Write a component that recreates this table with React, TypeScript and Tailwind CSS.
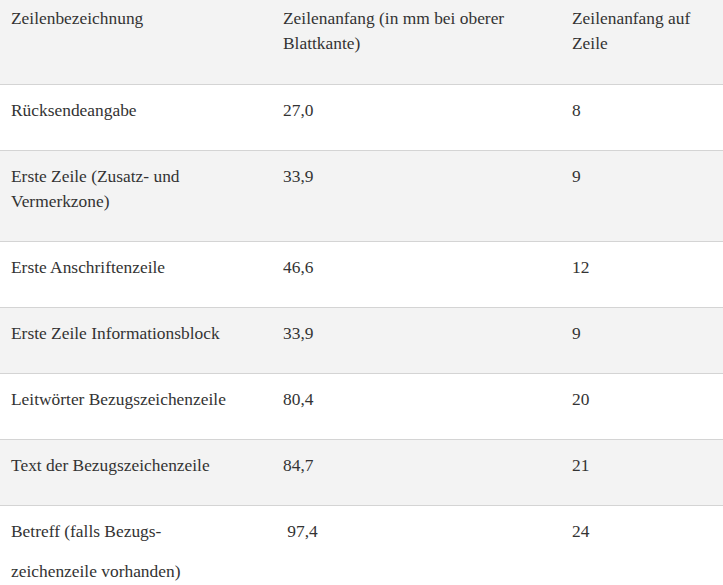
const rows: { name: React.ReactNode; mm: string; line: string }[] = [
  { name: 'Rücksendeangabe', mm: '27,0', line: '8' },
  { name: 'Erste Zeile (Zusatz- und Vermerkzone)', mm: '33,9', line: '9' },
  { name: 'Erste Anschriftenzeile', mm: '46,6', line: '12' },
  { name: 'Erste Zeile Informationsblock', mm: '33,9', line: '9' },
  { name: 'Leitwörter Bezugszeichenzeile', mm: '80,4', line: '20' },
  { name: 'Text der Bezugszeichenzeile', mm: '84,7', line: '21' },
  {
    name: (
      <>
        <div>Betreff (falls Bezugs-</div>
        <div className="mt-[15px]">zeichenzeile vorhanden)</div>
      </>
    ),
    mm: '\u00a097,4',
    line: '24',
  },
];

function App() {
  return (
    <div className="min-h-screen bg-white text-[#333] text-[17.4px] leading-[25px] font-['Liberation_Serif','Times_New_Roman',serif]">
      <table className="w-[723px] table-fixed border-collapse">
        <colgroup>
          <col className="w-[272px]" />
          <col className="w-[289px]" />
          <col className="w-[162px]" />
        </colgroup>
        <thead>
          <tr className="bg-[#f3f3f3] border-b border-[#d4d4d4] text-left align-top">
            <th className="font-normal px-[11px] pt-[6px] pb-[28px]">Zeilenbezeichnung</th>
            <th className="font-normal px-[11px] pt-[6px] pb-[28px]">Zeilenanfang (in mm bei oberer Blattkante)</th>
            <th className="font-normal px-[11px] pt-[6px] pb-[28px]">Zeilenanfang auf Zeile</th>
          </tr>
        </thead>
        <tbody>
          {rows.map((r, i) => (
            <tr
              key={i}
              className={`align-top border-b border-[#d4d4d4] ${i % 2 === 1 ? 'bg-[#f3f3f3]' : 'bg-white'}`}
            >
              <td className="px-[11px] pt-[13px] pb-[27px]">{r.name}</td>
              <td className="px-[11px] pt-[13px] pb-[27px] whitespace-pre">{r.mm}</td>
              <td className="px-[11px] pt-[13px] pb-[27px]">{r.line}</td>
            </tr>
          ))}
        </tbody>
      </table>
    </div>
  );
}

export default App;
